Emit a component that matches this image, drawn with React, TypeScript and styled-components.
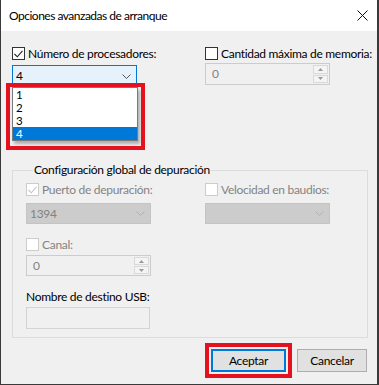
import React from "react";
import styled, { createGlobalStyle, css } from "styled-components";

const GlobalStyle = createGlobalStyle`
  html, body { margin: 0; padding: 0; background: #ffffff; }
  * { box-sizing: border-box; }
`;

const FONT = `Lato, "Noto Sans", "DejaVu Sans", sans-serif`;

const Window = styled.div`
  position: relative;
  width: 379px;
  height: 385px;
  background: #f0f0f0;
  border-left: 1px solid #3a3a3a;
  border-right: 2px solid #3a3a3a;
  border-bottom: 1px solid #3a3a3a;
  display: flex;
  flex-direction: column;
  font-family: ${FONT};
  font-size: 12px;
  letter-spacing: -0.3px;
  color: #000;
`;

const TitleBar = styled.div`
  height: 31px;
  flex: none;
  background: #ffffff;
  display: flex;
  align-items: center;
  justify-content: space-between;
  padding: 0 9px 0 8px;
`;

const Title = styled.span`
  font-size: 12px;
  line-height: 16px;
  letter-spacing: -0.5px;
  color: #000;
`;

const CloseIcon = styled.svg`
  display: block;
  width: 11px;
  height: 11px;
`;

const Content = styled.div`
  padding: 16px 10px 0 11px;
  display: flex;
  flex-direction: column;
`;

const TopGrid = styled.div`
  display: grid;
  grid-template-columns: 193px 1fr;
  height: 115px;
`;

const Column = styled.div`
  display: flex;
  flex-direction: column;
  align-items: flex-start;
`;

const CheckRow = styled.label<{ $disabled?: boolean }>`
  display: flex;
  align-items: center;
  gap: 3px;
  height: 13px;
  line-height: 13px;
  white-space: nowrap;
  color: ${(p) => (p.$disabled ? "#838383" : "#000")};
`;

const Box = styled.span<{ $disabled?: boolean }>`
  width: 13px;
  height: 13px;
  flex: none;
  border: 1px solid ${(p) => (p.$disabled ? "#cccccc" : "#333333")};
  background: #ffffff;
  display: flex;
  align-items: center;
  justify-content: center;
`;

const Gap = styled.div<{ $h: number }>`
  height: ${(p) => p.$h}px;
  flex: none;
`;

const ComboWrap = styled.div`
  position: relative;
`;

const comboBase = css`
  width: 125px;
  display: flex;
  align-items: center;
  justify-content: space-between;
  padding: 0 5px 0 3px;
  line-height: 16px;
`;

const Combo = styled.div<{ $disabled?: boolean; $h: number }>`
  ${comboBase};
  height: ${(p) => p.$h}px;
  background: ${(p) => (p.$disabled ? "#cccccc" : "#e5f1fb")};
  border: 1px solid ${(p) => (p.$disabled ? "#c4c4c4" : "#0078d7")};
  color: ${(p) => (p.$disabled ? "#838383" : "#000")};
`;

const Chevron = styled.svg`
  display: block;
  width: 9px;
  height: 5px;
`;

const DropList = styled.ul`
  position: absolute;
  top: 100%;
  left: 0;
  width: 126px;
  margin: 0;
  padding: 0;
  list-style: none;
  background: #ffffff;
  border: 1px solid #7a7a7a;
  box-shadow: 2px 3px 3px rgba(0, 0, 0, 0.28);
`;

const DropItem = styled.li<{ $selected?: boolean }>`
  height: 13px;
  line-height: 13px;
  font-size: 11.5px;
  padding-left: 3px;
  overflow: hidden;
  background: ${(p) => (p.$selected ? "#0078d7" : "transparent")};
  color: ${(p) => (p.$selected ? "#ffffff" : "#000")};
`;

const Highlight = styled.div`
  position: absolute;
  border: 4px solid #e3121e;
  pointer-events: none;
`;

const ListHighlight = styled(Highlight)`
  top: 18px;
  left: -6px;
  width: 139px;
  height: 67px;
`;

const Spin = styled.div<{ $h: number }>`
  width: 125px;
  height: ${(p) => p.$h}px;
  border: 1px solid #cccccc;
  background: #f0f0f0;
  display: flex;
  align-items: stretch;
  color: #838383;
`;

const SpinValue = styled.span`
  flex: 1;
  display: flex;
  align-items: center;
  padding-left: 6px;
  line-height: 16px;
`;

const SpinButtons = styled.div`
  width: 16px;
  display: flex;
  flex-direction: column;
  gap: 1px;
  padding: 1px 1px 1px 0;
`;

const SpinHalf = styled.div`
  flex: 1;
  border: 1px solid #d9d9d9;
  background: #f4f4f4;
  display: flex;
  align-items: center;
  justify-content: center;
`;

const Arrow = styled.svg`
  display: block;
  width: 5px;
  height: 3px;
`;

const Group = styled.fieldset`
  margin: 0;
  width: 356px;
  border: 1px solid #dcdcdc;
  padding: 5px 0 8px 13px;
  display: grid;
  grid-template-columns: 179px 1fr;
  align-items: start;
`;

const Legend = styled.legend`
  margin-left: 7px;
  padding: 0 1px;
  line-height: 16px;
  color: #000;
`;

const PlainLabel = styled.div`
  height: 16px;
  line-height: 16px;
  color: #000;
  white-space: nowrap;
`;

const TextBox = styled.div`
  width: 124px;
  height: 22px;
  border: 1px solid #d4d4d4;
  background: #f0f0f0;
`;

const ButtonRow = styled.div`
  margin-top: 11px;
  display: flex;
  justify-content: flex-end;
  gap: 11px;
`;

const ButtonWrap = styled.div`
  position: relative;
`;

const Button = styled.button<{ $default?: boolean; $w: number }>`
  width: ${(p) => p.$w}px;
  height: 23px;
  padding: 0;
  font-family: ${FONT};
  font-size: 12px;
  letter-spacing: -0.3px;
  line-height: 16px;
  color: #000;
  background: #e1e1e1;
  border: ${(p) => (p.$default ? "2px solid #0078d7" : "1px solid #adadad")};
`;

const ButtonHighlight = styled(Highlight)`
  top: -6px;
  left: -6px;
  right: -6px;
  bottom: -6px;
`;

function CheckBox({ checked, disabled, label }: { checked?: boolean; disabled?: boolean; label: string }) {
  return (
    <CheckRow $disabled={disabled}>
      <Box $disabled={disabled}>
        {checked && (
          <svg width="9" height="8" viewBox="0 0 9 8">
            <path d="M0.5 4 L3.3 6.8 L8.5 0.8" fill="none" stroke={disabled ? "#c4c4c4" : "#222"} strokeWidth="1.1" />
          </svg>
        )}
      </Box>
      {label}
    </CheckRow>
  );
}

function ChevronIcon({ color }: { color: string }) {
  return (
    <Chevron viewBox="0 0 9 5">
      <path d="M0.5 0.5 L4.5 4.5 L8.5 0.5" fill="none" stroke={color} strokeWidth="1" />
    </Chevron>
  );
}

function SpinBox({ value, h }: { value: string; h: number }) {
  return (
    <Spin $h={h}>
      <SpinValue>{value}</SpinValue>
      <SpinButtons>
        <SpinHalf>
          <Arrow viewBox="0 0 5 3">
            <path d="M0 3 L2.5 0 L5 3 Z" fill="#9a9a9a" />
          </Arrow>
        </SpinHalf>
        <SpinHalf>
          <Arrow viewBox="0 0 5 3">
            <path d="M0 0 L2.5 3 L5 0 Z" fill="#9a9a9a" />
          </Arrow>
        </SpinHalf>
      </SpinButtons>
    </Spin>
  );
}

export default function App() {
  const options = ["1", "2", "3", "4"];
  return (
    <>
      <GlobalStyle />
      <Window>
        <TitleBar>
          <Title>Opciones avanzadas de arranque</Title>
          <CloseIcon viewBox="0 0 11 11">
            <path d="M0.5 0.5 L10.5 10.5 M10.5 0.5 L0.5 10.5" stroke="#111" strokeWidth="1" />
          </CloseIcon>
        </TitleBar>
        <Content>
          <TopGrid>
            <Column>
              <CheckBox checked label="Número de procesadores:" />
              <Gap $h={5} />
              <ComboWrap>
                <Combo $h={22}>
                  <span>4</span>
                  <ChevronIcon color="#555" />
                </Combo>
                <DropList>
                  {options.map((o) => (
                    <DropItem key={o} $selected={o === "4"}>
                      {o}
                    </DropItem>
                  ))}
                </DropList>
                <ListHighlight />
              </ComboWrap>
            </Column>
            <Column>
              <CheckBox label="Cantidad máxima de memoria:" />
              <Gap $h={3} />
              <SpinBox value="0" h={22} />
            </Column>
          </TopGrid>
          <Group>
            <Legend>Configuración global de depuración</Legend>
            <Column>
              <CheckBox checked disabled label="Puerto de depuración:" />
              <Gap $h={7} />
              <Combo $disabled $h={21}>
                <span>1394</span>
                <ChevronIcon color="#b0b0b0" />
              </Combo>
              <Gap $h={14} />
              <CheckBox disabled label="Canal:" />
              <Gap $h={4} />
              <SpinBox value="0" h={21} />
              <Gap $h={13} />
              <PlainLabel>Nombre de destino USB:</PlainLabel>
              <Gap $h={2} />
              <TextBox />
            </Column>
            <Column>
              <CheckBox disabled label="Velocidad en baudios:" />
              <Gap $h={7} />
              <Combo $disabled $h={21}>
                <span />
                <ChevronIcon color="#b0b0b0" />
              </Combo>
            </Column>
          </Group>
          <ButtonRow>
            <ButtonWrap>
              <Button $default $w={75}>Aceptar</Button>
              <ButtonHighlight />
            </ButtonWrap>
            <Button $w={70}>Cancelar</Button>
          </ButtonRow>
        </Content>
      </Window>
    </>
  );
}
